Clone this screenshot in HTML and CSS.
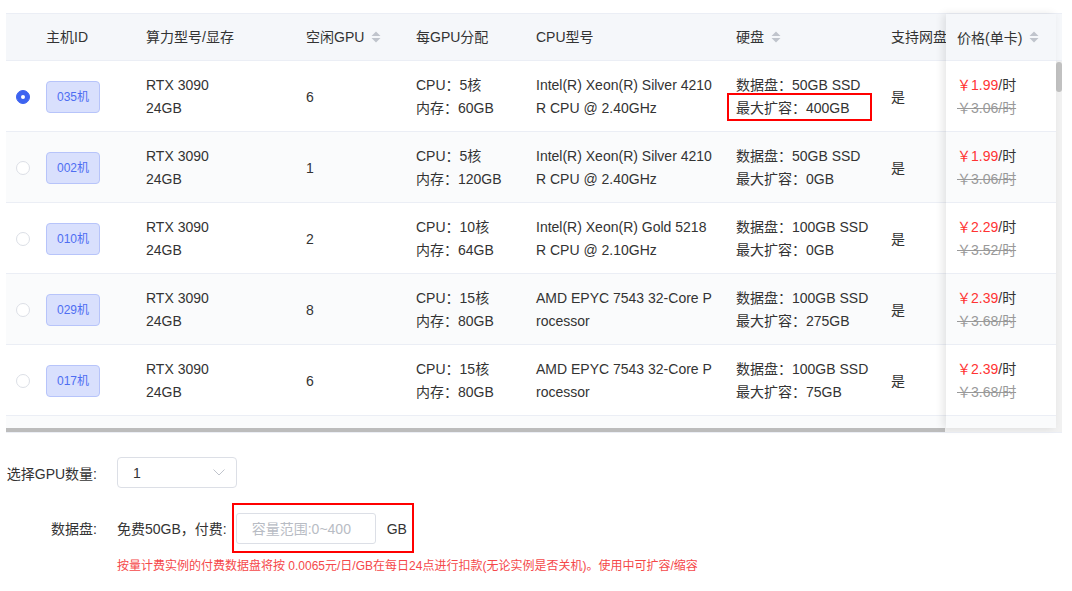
FILE: index.html
```html
<!DOCTYPE html>
<html lang="zh-CN">
<head>
  <meta charset="UTF-8">
  <meta name="viewport" content="width=device-width, initial-scale=1.0">
  <title>选择主机</title>
  <link rel="stylesheet" href="styles.css">
</head>
<body>
  <div class="page">
    <div class="host-table">
      <div class="head-row">
        <div class="cell c-radio"></div>
        <div class="cell c-id">主机ID</div>
        <div class="cell c-gpu">算力型号/显存</div>
        <div class="cell c-free">空闲GPU
          <svg class="sort" width="10" height="12" viewBox="0 0 10 12"><path d="M0.5 5L5 0.5L9.5 5Z M0.5 7L5 11.5L9.5 7Z"/></svg>
        </div>
        <div class="cell c-alloc">每GPU分配</div>
        <div class="cell c-cpu">CPU型号</div>
        <div class="cell c-disk">硬盘
          <svg class="sort" width="10" height="12" viewBox="0 0 10 12"><path d="M0.5 5L5 0.5L9.5 5Z M0.5 7L5 11.5L9.5 7Z"/></svg>
        </div>
        <div class="cell c-net">支持网盘</div>
      </div>

      <div class="body-wrap">
        <div class="body-rows">
          <div class="row">
            <div class="cell c-radio"><span class="radio checked"></span></div>
            <div class="cell c-id"><span class="host-tag">035机</span></div>
            <div class="cell c-gpu"><div>RTX 3090</div><div>24GB</div></div>
            <div class="cell c-free">6</div>
            <div class="cell c-alloc"><div>CPU：5核</div><div>内存：60GB</div></div>
            <div class="cell c-cpu">Intel(R) Xeon(R) Silver 4210R CPU @ 2.40GHz</div>
            <div class="cell c-disk"><div>数据盘：50GB SSD</div><div>最大扩容：400GB</div><span class="mark"></span></div>
            <div class="cell c-net">是</div>
          </div>
          <div class="row stripe">
            <div class="cell c-radio"><span class="radio"></span></div>
            <div class="cell c-id"><span class="host-tag">002机</span></div>
            <div class="cell c-gpu"><div>RTX 3090</div><div>24GB</div></div>
            <div class="cell c-free">1</div>
            <div class="cell c-alloc"><div>CPU：5核</div><div>内存：120GB</div></div>
            <div class="cell c-cpu">Intel(R) Xeon(R) Silver 4210R CPU @ 2.40GHz</div>
            <div class="cell c-disk"><div>数据盘：50GB SSD</div><div>最大扩容：0GB</div></div>
            <div class="cell c-net">是</div>
          </div>
          <div class="row">
            <div class="cell c-radio"><span class="radio"></span></div>
            <div class="cell c-id"><span class="host-tag">010机</span></div>
            <div class="cell c-gpu"><div>RTX 3090</div><div>24GB</div></div>
            <div class="cell c-free">2</div>
            <div class="cell c-alloc"><div>CPU：10核</div><div>内存：64GB</div></div>
            <div class="cell c-cpu">Intel(R) Xeon(R) Gold 5218R CPU @ 2.10GHz</div>
            <div class="cell c-disk"><div>数据盘：100GB SSD</div><div>最大扩容：0GB</div></div>
            <div class="cell c-net">是</div>
          </div>
          <div class="row stripe">
            <div class="cell c-radio"><span class="radio"></span></div>
            <div class="cell c-id"><span class="host-tag">029机</span></div>
            <div class="cell c-gpu"><div>RTX 3090</div><div>24GB</div></div>
            <div class="cell c-free">8</div>
            <div class="cell c-alloc"><div>CPU：15核</div><div>内存：80GB</div></div>
            <div class="cell c-cpu">AMD EPYC 7543 32-Core Processor</div>
            <div class="cell c-disk"><div>数据盘：100GB SSD</div><div>最大扩容：275GB</div></div>
            <div class="cell c-net">是</div>
          </div>
          <div class="row">
            <div class="cell c-radio"><span class="radio"></span></div>
            <div class="cell c-id"><span class="host-tag">017机</span></div>
            <div class="cell c-gpu"><div>RTX 3090</div><div>24GB</div></div>
            <div class="cell c-free">6</div>
            <div class="cell c-alloc"><div>CPU：15核</div><div>内存：80GB</div></div>
            <div class="cell c-cpu">AMD EPYC 7543 32-Core Processor</div>
            <div class="cell c-disk"><div>数据盘：100GB SSD</div><div>最大扩容：75GB</div></div>
            <div class="cell c-net">是</div>
          </div>
          <div class="row stripe"></div>
        </div>
        <div class="vbar"><div class="vthumb"></div></div>
      </div>

      <div class="hbar"><div class="hthumb"></div><div class="htrack"></div></div>

      <!-- fixed price column -->
      <div class="fixed-col">
        <div class="fixed-head">价格(单卡)
          <svg class="sort" width="10" height="12" viewBox="0 0 10 12"><path d="M0.5 5L5 0.5L9.5 5Z M0.5 7L5 11.5L9.5 7Z"/></svg>
        </div>
        <div class="fixed-cell"><div><span class="price">￥1.99</span>/时</div><div class="old-price">￥3.06/时</div></div>
        <div class="fixed-cell stripe"><div><span class="price">￥1.99</span>/时</div><div class="old-price">￥3.06/时</div></div>
        <div class="fixed-cell"><div><span class="price">￥2.29</span>/时</div><div class="old-price">￥3.52/时</div></div>
        <div class="fixed-cell stripe"><div><span class="price">￥2.39</span>/时</div><div class="old-price">￥3.68/时</div></div>
        <div class="fixed-cell"><div><span class="price">￥2.39</span>/时</div><div class="old-price">￥3.68/时</div></div>
        <div class="fixed-cell stripe"></div>
      </div>
    </div>

    <div class="order-form">
      <div class="form-row">
        <label class="form-label">选择GPU数量:</label>
        <div class="gpu-select">
          <span>1</span>
          <svg width="12" height="7" viewBox="0 0 12 7"><polyline points="0.5,0.5 6,6 11.5,0.5" fill="none" stroke="#c0c4cc" stroke-width="1"/></svg>
        </div>
      </div>
      <div class="form-row disk-row">
        <label class="form-label">数据盘:</label>
        <span>免费50GB，付费:</span>
        <div class="mark-box">
          <input type="text" class="disk-input" placeholder="容量范围:0~400">
          <span class="unit">GB</span>
        </div>
      </div>
      <p class="disk-note">按量计费实例的付费数据盘将按 0.0065元/日/GB在每日24点进行扣款(无论实例是否关机)。使用中可扩容/缩容</p>
    </div>
  </div>
</body>
</html>
```

FILE: styles.css
```css
* {
  box-sizing: border-box;
}
body {
  margin: 0;
  font-family: "Liberation Sans", "Noto Sans CJK SC", sans-serif;
  font-size: 14px;
  color: #333;
  background-color: #fff;
}
.page {
  padding: 13px 0 0 6px;
}

/* table */
.host-table {
  position: relative;
  width: 1056px;
  border-top: 1px solid #ebeef5;
  border-bottom: 1px solid #ebeef5;
}
.head-row {
  display: flex;
  height: 47px;
  background-color: #f5f7fa;
  border-bottom: 1px solid #ebeef5;
  overflow: hidden;
}
.head-row .cell {
  flex-direction: row;
  align-items: center;
  justify-content: flex-start;
}
.cell {
  display: flex;
  flex-direction: column;
  justify-content: center;
  flex: none;
  padding: 0 10px;
  line-height: 23px;
  white-space: nowrap;
  position: relative;
}
.row .cell {
  padding-top: 2px;
}
.c-radio { width: 30px; }
.c-id { width: 100px; }
.c-gpu { width: 160px; }
.c-free { width: 110px; }
.c-alloc { width: 120px; }
.c-cpu {
  width: 200px;
  padding-right: 11px;
  white-space: normal;
  word-break: break-all;
}
.c-disk { width: 155px; }
.c-net { width: 130px; }

.sort {
  margin-left: 7px;
  fill: #c0c4cc;
}

.body-wrap {
  display: flex;
  height: 367px;
}
.body-rows {
  width: 1050px;
  overflow: hidden;
}
.row {
  display: flex;
  height: 71px;
  border-bottom: 1px solid #ebeef5;
}
.stripe {
  background-color: #fafbfc;
}
.vbar {
  width: 6px;
  background-color: #f1f1f1;
}
.vthumb {
  margin-top: 1px;
  height: 30px;
  background-color: #c1c1c1;
  border-radius: 3px;
}
.hbar {
  display: flex;
  height: 4px;
}
.hthumb {
  width: 939px;
  background-color: #bcbcbc;
}
.htrack {
  flex: 1;
  background-color: #f1f1f1;
}

.radio {
  display: block;
  width: 14px;
  height: 14px;
  border-radius: 50%;
  border: 1px solid #dcdfe6;
  background-color: #fff;
  position: relative;
}
.radio.checked {
  border-color: #3d63f0;
  background-color: #3d63f0;
}
.radio.checked::after {
  content: "";
  position: absolute;
  left: 4px;
  top: 4px;
  width: 4px;
  height: 4px;
  border-radius: 50%;
  background-color: #fff;
}
.host-tag {
  display: inline-block;
  width: 54px;
  height: 32px;
  line-height: 30px;
  text-align: center;
  font-size: 12px;
  color: #4e6ef2;
  background-color: #d9e0fd;
  border: 1px solid #b7c4fa;
  border-radius: 4px;
}
.mark {
  position: absolute;
  left: 1px;
  top: 32px;
  width: 145px;
  height: 28px;
  border: 2px solid #f00;
}

/* fixed price column */
.fixed-col {
  position: absolute;
  top: 0;
  right: 6px;
  width: 110px;
  height: 414px;
  overflow: hidden;
  background-color: #fff;
  box-shadow: -3px 0 8px rgba(0, 0, 0, 0.1);
}
.fixed-head {
  display: flex;
  align-items: center;
  height: 47px;
  padding-left: 11px;
  background-color: #f5f7fa;
  border-bottom: 1px solid #ebeef5;
  white-space: nowrap;
}
.fixed-cell {
  display: flex;
  flex-direction: column;
  justify-content: center;
  height: 71px;
  padding: 2px 0 0 11px;
  line-height: 23px;
  border-bottom: 1px solid #ebeef5;
  white-space: nowrap;
}
.price {
  color: #f33;
}
.old-price {
  color: #999;
  text-decoration: line-through;
}

/* form */
.order-form {
  padding-top: 24px;
}
.form-row {
  display: flex;
  align-items: center;
}
.form-label {
  width: 91px;
  margin-right: 20px;
  text-align: right;
  white-space: nowrap;
  color: #333;
}
.gpu-select {
  display: flex;
  align-items: center;
  justify-content: space-between;
  width: 120px;
  height: 31px;
  padding: 0 11px 0 15px;
  border: 1px solid #dcdfe6;
  border-radius: 4px;
}
.disk-row {
  margin-top: 15px;
}
.mark-box {
  display: flex;
  align-items: center;
  margin-left: 5px;
  padding: 8px 5px 7px 2px;
  border: 2px solid #f00;
}
.disk-input {
  width: 140px;
  height: 31px;
  padding: 0 15px;
  border: 1px solid #dcdfe6;
  border-radius: 3px;
  font: inherit;
  color: #333;
  outline: none;
}
.disk-input::placeholder {
  color: #b8bcc4;
}
.unit {
  margin-left: 11px;
}
.disk-note {
  margin: 4px 0 0 111px;
  font-size: 12px;
  line-height: 18px;
  color: #f5484a;
}
```
